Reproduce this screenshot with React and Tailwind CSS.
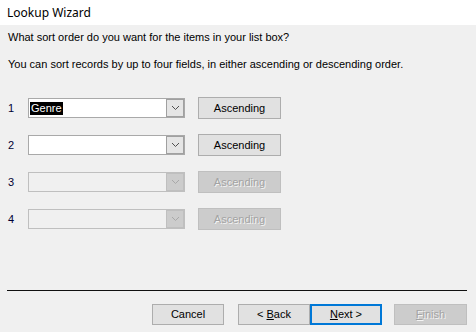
import React from "react";

const body = { fontFamily: '"Liberation Sans", Arial, sans-serif' };

function Chevron({ color }) {
  return (
    <svg width="9" height="6" viewBox="0 0 9 6">
      <path d="M1 1 L4.5 4.5 L8 1" fill="none" stroke={color} strokeWidth="1" />
    </svg>
  );
}

function Combo({ enabled, value }) {
  return (
    <div
      className={
        "flex w-[157px] h-[20px] border " +
        (enabled ? "border-[#a9a9a9] bg-white" : "border-[#bfbfbf] bg-[#f0f0f0]")
      }
    >
      <div className="flex-1 flex items-center pl-[1px]">
        {value && (
          <span className="bg-black text-white px-[1px] leading-[13px] text-[11px]">{value}</span>
        )}
      </div>
      <div
        className={
          "w-[18px] flex items-center justify-center border " +
          (enabled ? "bg-[#e5e5e5] border-[#a0a0a0]" : "bg-[#cccccc] border-[#bfbfbf]")
        }
      >
        <Chevron color={enabled ? "#505050" : "#a8a8a8"} />
      </div>
    </div>
  );
}

function Btn({ children, enabled = true, focus = false, w = "w-[83px]", h = "h-[22px]" }) {
  let cls = "flex items-center justify-center text-[11px] whitespace-pre ";
  if (!enabled) cls += "bg-[#cccccc] border border-[#bfbfbf] text-[#a3a3a3] [text-shadow:1px_1px_0_#f4f4f4] ";
  else if (focus) cls += "bg-[#e1e1e1] border-2 border-[#0078d7] text-black ";
  else cls += "bg-[#e1e1e1] border border-[#adadad] text-black ";
  return (
    <div className={cls + w + " " + h}>
      <span>{children}</span>
    </div>
  );
}

function Row({ n, enabled, value }) {
  return (
    <div className="flex items-center h-[22px]">
      <div className="w-[28px] pl-[8px] text-[11px] text-[#000033]">{n}</div>
      <Combo enabled={enabled} value={value} />
      <div className="w-[13px]" />
      <Btn enabled={enabled}>Ascending</Btn>
    </div>
  );
}

export default function App() {
  return (
    <div className="w-[476px] h-[332px] bg-[#f0f0f0] flex flex-col text-black overflow-hidden" style={body}>
      <div
        className="h-[25px] bg-white flex items-center pl-[7px] text-[12px]"
        style={{ fontFamily: '"Noto Sans", "Open Sans", sans-serif' }}
      >
        Lookup Wizard
      </div>
      <div className="pl-[8px] pt-[6px] text-[11px] leading-[13px]">
        <div>What sort order do you want for the items in your list box?</div>
        <div className="mt-[14px]">You can sort records by up to four fields, in either ascending or descending order.</div>
      </div>
      <div className="mt-[26px] flex flex-col gap-[15px]">
        <Row n="1" enabled value="Genre" />
        <Row n="2" enabled />
        <Row n="3" enabled={false} />
        <Row n="4" enabled={false} />
      </div>
      <div className="mt-auto">
        <div className="ml-[7px] mr-[9px] border-t border-[#101010]" />
        <div className="flex justify-end pr-[9px] mt-[13px] pb-[7px]">
          <Btn w="w-[72px]" h="h-[21px]">Cancel</Btn>
          <div className="w-[14px]" />
          <Btn w="w-[72px]" h="h-[21px]">
            {"< "}
            <u>B</u>ack
          </Btn>
          <Btn w="w-[72px]" h="h-[21px]" focus>
            <u>N</u>
            {"ext >"}
          </Btn>
          <div className="w-[12px]" />
          <Btn w="w-[73px]" h="h-[21px]" enabled={false}>
            <u>F</u>inish
          </Btn>
        </div>
      </div>
    </div>
  );
}
